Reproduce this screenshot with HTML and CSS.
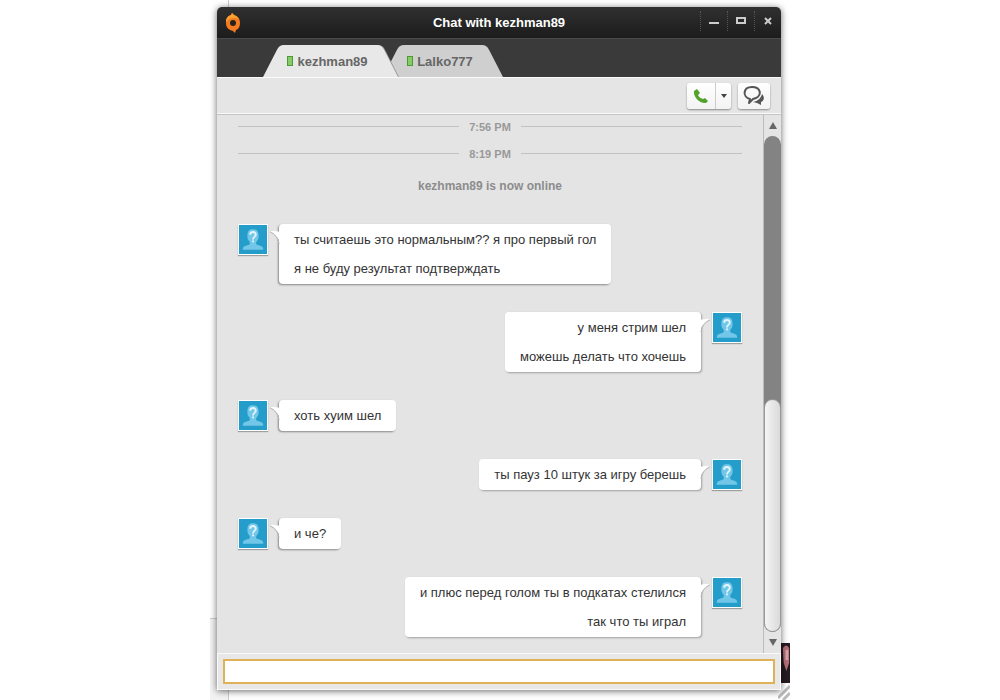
FILE: index.html
```html
<!DOCTYPE html>
<html lang="ru">
    <head>
        <meta charset="utf-8">
        <title>Chat with kezhman89</title>
        <link rel="stylesheet" href="styles.css">
    </head>
    <body>
        <!-- shapes used more than once -->
        <svg class="defs" aria-hidden="true">
            <symbol id="user" viewBox="0 0 30 30">
                <path d="M4 26c0-4 3-4 6-5 2-1 2-2 1-4-2-2-2-4-2-6 0-5 2-7 6-7s6 2 6 7c0 2 0 4-2 6-1 2-1 3 1 4 3 1 6 1 6 5z" fill="#72c6e8"/>
                <path d="M12 10c0-4 6-4 6 0 0 2-3 2-3 5M15 16v2" fill="none" stroke="#e4f6fd" stroke-width="2"/>
            </symbol>
            <symbol id="tail" viewBox="0 0 10 14">
                <path d="M0 1C4 1 8 1 10 2v12C9 8 5 3 0 1z" fill="#fff"/>
                <path d="M0 2c5 2 8 6 9 12" fill="none" stroke="#b5b5b5"/>
            </symbol>
        </svg>
        <div class="behind-line top"></div>
        <div class="behind-line bottom"></div>
        <div class="behind-panel"></div>
        <svg class="behind-photo" viewBox="0 0 10 40" preserveAspectRatio="none" aria-hidden="true">
            <path d="M0 0h10v40H0z" fill="#251b22"/>
            <path d="M2 5Q6 0 9 5v15l-3 8-3-8z" fill="#b56f78"/>
            <path d="M5 7h3v10H5z" fill="#dba5a8"/>
        </svg>
        <svg class="behind-grip" viewBox="0 0 12 16" aria-hidden="true">
            <path d="M0 14L12 2M5 16l7-7" stroke="#bbb" stroke-width="3"/>
        </svg>

        <div class="window">
            <header class="titlebar">
                <svg class="logo" viewBox="0 0 16 20" aria-hidden="true">
                    <path d="M7 0L6 2C2 3 1 6 1 10c0 5 3 7 7 8l2 2 1-3c3-1 4-4 4-7 0-4-2-7-6-8z" fill="#f47b20"/>
                    <path d="M7 0L6 2C3 3 1 5 1 9c3-4 8-5 13-3-1-2-3-3-5-4z" fill="#fba22e"/>
                    <circle cx="8" cy="10" r="3" fill="#222"/>
                </svg>
                <h1>Chat with kezhman89</h1>
                <div class="controls">
                    <button aria-label="Minimize"><svg viewBox="0 0 12 12"><path d="M1 8h10" stroke="#ccc" stroke-width="2"/></svg></button>
                    <button aria-label="Maximize"><svg viewBox="0 0 12 12"><path d="M2 3h8v5H2z" fill="none" stroke="#ccc" stroke-width="2"/></svg></button>
                    <button aria-label="Close"><svg viewBox="0 0 12 12"><path d="M3 3l6 6M9 3L3 9" stroke="#ccc" stroke-width="2"/></svg></button>
                </div>
            </header>

            <nav class="tabs">
                <button class="tab active">
                    <svg class="shape" viewBox="0 0 135 33" preserveAspectRatio="none" aria-hidden="true"><path d="M0 33L14 5Q16 0 21 0H114Q119 0 121 5L135 33z"/></svg>
                    <span class="status"></span>kezhman89
                </button>
                <button class="tab">
                    <svg class="shape" viewBox="0 0 120 33" preserveAspectRatio="none" aria-hidden="true"><path d="M0 33L14 5Q16 0 21 0H99Q104 0 106 5L120 33z"/></svg>
                    <span class="status"></span>Lalko777
                </button>
            </nav>

            <div class="toolbar">
                <div class="call">
                    <button aria-label="Call">
                        <svg width="16" height="16" viewBox="0 0 16 16"><path d="M1 3l3-2 3 4-2 2c1 2 2 3 5 4l2-1 3 3-2 2C7 16 0 9 1 3z" fill="#51a32c"/></svg>
                    </button>
                    <button class="more" aria-label="Call options">
                        <svg width="6" height="4" viewBox="0 0 6 4"><path d="M0 0h6L3 4z" fill="#444"/></svg>
                    </button>
                </div>
                <button class="group" aria-label="Group chat">
                    <svg width="22" height="20" viewBox="0 0 22 20">
                        <path d="M19 8c3 3 2 7-1 8v3l-4-2-4-1c5-1 8-4 9-8z" fill="#555"/>
                        <path d="M7 13C-1 11 0 1 9 1s10 8 4 11l-3 1-4 4z" fill="#fafafa" stroke="#555" stroke-width="2" stroke-linejoin="round"/>
                    </svg>
                </button>
            </div>

            <div class="body">
                <main class="chat">
                    <div class="time">7:56 PM</div>
                    <div class="time">8:19 PM</div>
                    <p class="notice">kezhman89 is now online</p>

                    <div class="message">
                        <svg class="avatar"><use href="#user"/></svg>
                        <div class="bubble">
                            <svg class="tail"><use href="#tail"/></svg>
                            <p>ты считаешь это нормальным?? я про первый гол</p>
                            <p>я не буду результат подтверждать</p>
                        </div>
                    </div>
                    <div class="message mine">
                        <svg class="avatar"><use href="#user"/></svg>
                        <div class="bubble">
                            <svg class="tail"><use href="#tail"/></svg>
                            <p>у меня стрим шел</p>
                            <p>можешь делать что хочешь</p>
                        </div>
                    </div>
                    <div class="message">
                        <svg class="avatar"><use href="#user"/></svg>
                        <div class="bubble">
                            <svg class="tail"><use href="#tail"/></svg>
                            <p>хоть хуим шел</p>
                        </div>
                    </div>
                    <div class="message mine">
                        <svg class="avatar"><use href="#user"/></svg>
                        <div class="bubble">
                            <svg class="tail"><use href="#tail"/></svg>
                            <p>ты пауз 10 штук за игру берешь</p>
                        </div>
                    </div>
                    <div class="message">
                        <svg class="avatar"><use href="#user"/></svg>
                        <div class="bubble">
                            <svg class="tail"><use href="#tail"/></svg>
                            <p>и че?</p>
                        </div>
                    </div>
                    <div class="message mine">
                        <svg class="avatar"><use href="#user"/></svg>
                        <div class="bubble">
                            <svg class="tail"><use href="#tail"/></svg>
                            <p>и плюс перед голом ты в подкатах стелился</p>
                            <p>так что ты играл</p>
                        </div>
                    </div>
                </main>
                <div class="scrollbar">
                    <button aria-label="Scroll up"><svg width="8" height="7" viewBox="0 0 8 7"><path d="M4 0l4 7H0z" fill="#666"/></svg></button>
                    <div class="track"><div class="thumb"></div></div>
                    <button aria-label="Scroll down"><svg width="8" height="7" viewBox="0 0 8 7"><path d="M0 0h8L4 7z" fill="#666"/></svg></button>
                </div>
            </div>

            <footer class="compose">
                <input type="text" aria-label="Message">
            </footer>
        </div>
    </body>
</html>
```
FILE: styles.css
```css
* {
    box-sizing: border-box;
}
body {
    display: flex;
    justify-content: center;
    height: 100vh;
    min-height: 500px;
    margin: 0;
    padding: 7px 2px 10px 0;
    position: relative;
    background-color: white;
    font-family: "Liberation Sans", Arial, sans-serif;
    font-size: 13px;
    color: #333;
}
h1, p {
    margin: 0;
}
button {
    display: flex;
    align-items: center;
    justify-content: center;
    margin: 0;
    padding: 0;
    border: none;
    background: none;
    font: inherit;
}
.defs {
    position: absolute;
    width: 0;
    height: 0;
}

/* What shows from behind the window */
.behind-line {
    position: absolute;
    left: calc(50% - 272px);
    width: 1px;
    background-color: #ccc;
}
.behind-line.top {
    top: 0;
    height: 7px;
}
.behind-line.bottom {
    bottom: 0;
    height: 10px;
}
.behind-panel {
    position: absolute;
    left: calc(50% - 290px);
    bottom: 0;
    width: 18px;
    height: 82px;
    border-top: 1px solid #ccc;
    background-color: #f3f3f3;
}
.behind-photo {
    position: absolute;
    left: calc(50% + 281px);
    bottom: 17px;
    width: 9px;
    height: 40px;
}
.behind-grip {
    position: absolute;
    left: calc(50% + 278px);
    bottom: 0;
    width: 12px;
    height: 16px;
}

.window {
    position: relative;
    display: flex;
    flex-direction: column;
    width: 100%;
    max-width: 564px;
    border-radius: 5px 5px 0 0;
    background-color: #e4e4e4;
    box-shadow: 0 1px 7px rgba(0, 0, 0, 0.6);
}

.titlebar {
    display: grid;
    grid-template-columns: 1fr auto 1fr;
    align-items: center;
    height: 31px;
    border-radius: 5px 5px 0 0;
    background: linear-gradient(#303030, #1c1c1c);
}
.logo {
    width: 16px;
    height: 20px;
    margin-left: 8px;
}
h1 {
    font-size: 13px;
    color: white;
}
.controls {
    display: flex;
    justify-content: flex-end;
    height: 20px;
    margin-bottom: 3px;
}
.controls button {
    width: 27px;
    border-left: 1px dotted #555;
}
.controls svg {
    width: 12px;
    height: 12px;
}

.tabs {
    display: flex;
    align-items: flex-end;
    height: 39px;
    padding-left: 46px;
    border-top: 1px solid #4a4a4a;
    background-color: #3a3a3a;
}
.tab {
    position: relative;
    z-index: 0;
    gap: 4px;
    width: 120px;
    height: 32px;
    margin-left: -15px;
    padding-right: 6px;
    font-weight: bold;
    color: #666;
}
.tab.active {
    z-index: 1;
    width: 135px;
    margin-left: 0;
}
.shape {
    position: absolute;
    z-index: -1;
    inset: 0;
    width: 100%;
    height: 100%;
    fill: #cfcfcf;
}
.active .shape {
    fill: #e8e8e8;
    filter: drop-shadow(1px 0 0 #999);
}
.status {
    width: 6px;
    height: 10px;
    border: 1px solid #4c9a34;
    background-color: #85cb68;
}

.toolbar {
    display: flex;
    align-items: center;
    justify-content: flex-end;
    gap: 7px;
    height: 37px;
    padding-right: 11px;
    border-top: 1px solid #fafafa;
    border-bottom: 1px solid #fafafa;
    background-color: #e5e5e5;
}
.call, .group {
    height: 26px;
    border-radius: 3px;
    background: linear-gradient(#fff, #f3f3f3);
    box-shadow: 0 1px 2px rgba(0, 0, 0, 0.4);
}
.call {
    display: flex;
}
.call button {
    width: 28px;
}
.call .more {
    width: 16px;
    border-left: 1px solid #ccc;
}
.group {
    width: 32px;
}

.body {
    display: flex;
    flex: 1;
    min-height: 0;
    border-top: 1px solid #c4c4c4;
}
.chat {
    flex: 1;
    padding: 0 21px;
    overflow: hidden;
}
.time {
    display: flex;
    align-items: center;
    gap: 10px;
    height: 27px;
    margin-top: -2px;
    font-size: 11px;
    font-weight: bold;
    color: #999;
}
.time + .time {
    margin-top: 0;
}
.time::before, .time::after {
    content: "";
    flex: 1;
    height: 1px;
    background-color: #c2c2c2;
}
.notice {
    margin: 9px 0 28px;
    font-size: 12px;
    line-height: 20px;
    text-align: center;
    font-weight: bold;
    color: #8c8c8c;
}
.message {
    display: flex;
    align-items: flex-start;
    gap: 11px;
    margin-bottom: 28px;
}
.message.mine {
    flex-direction: row-reverse;
}
.avatar {
    width: 30px;
    height: 31px;
    border: 1px solid white;
    background-color: #249dcb;
    box-shadow: 0 1px 1px rgba(0, 0, 0, 0.3);
}
.bubble {
    position: relative;
    padding: 1px 15px;
    border-radius: 4px;
    background-color: white;
    box-shadow: -1px 1px 2px rgba(0, 0, 0, 0.4);
    line-height: 29px;
}
.mine .bubble {
    box-shadow: 1px 1px 2px rgba(0, 0, 0, 0.3);
    text-align: right;
}
.tail {
    position: absolute;
    left: -9px;
    top: 6px;
    width: 10px;
    height: 14px;
}
.mine .tail {
    left: auto;
    right: -9px;
    transform: scaleX(-1);
}

.scrollbar {
    display: flex;
    flex-direction: column;
    width: 18px;
    border-left: 1px solid #bbb;
}
.scrollbar button {
    height: 21px;
}
.track {
    display: flex;
    flex: 1;
    flex-direction: column;
    justify-content: flex-end;
    border-radius: 9px;
    background-color: #838383;
}
.thumb {
    height: 47%;
    border: 1px solid #999;
    border-radius: 9px;
    background: linear-gradient(to right, #f4f4f4, #dadada);
}

.compose {
    display: flex;
    height: 37px;
    padding: 5px;
    border: 1px solid #fafafa;
    background-color: #e8e8e8;
}
.compose input {
    flex: 1;
    min-width: 0;
    padding: 0 8px;
    border: 2px solid #dfb258;
    background-color: white;
    font: inherit;
    outline: none;
}
```
